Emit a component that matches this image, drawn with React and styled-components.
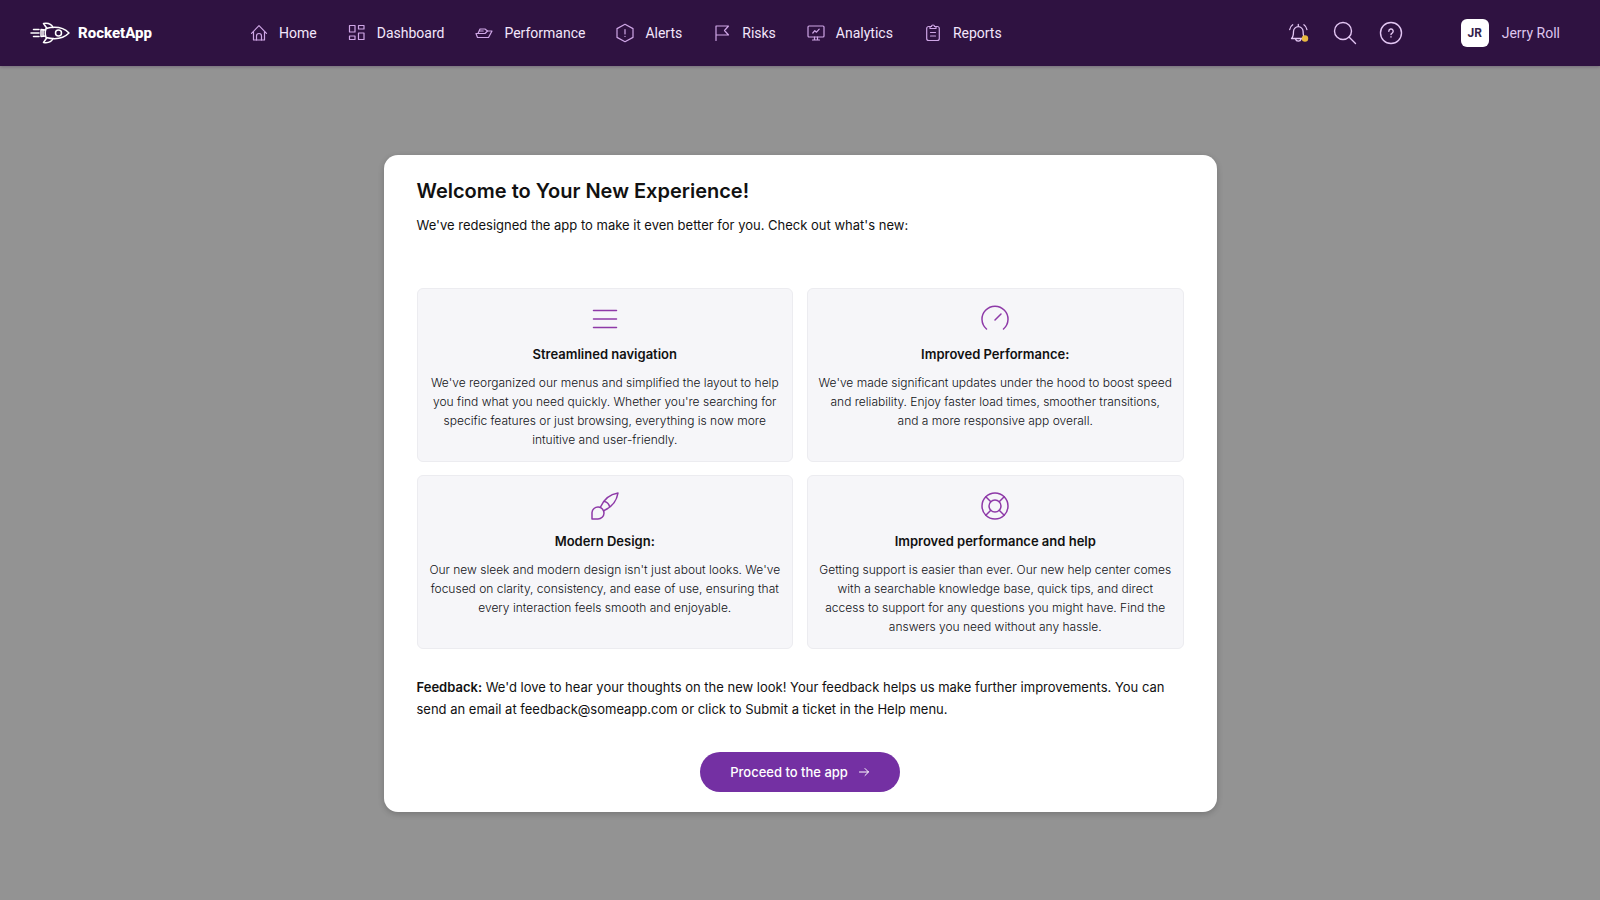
import React from "react";
import styled, { createGlobalStyle } from "styled-components";

const GlobalStyle = createGlobalStyle`
  * {
    box-sizing: border-box;
  }
  body {
    margin: 0;
    background: #939393;
    font-family: Inter, "Liberation Sans", sans-serif;
    color: #111;
  }
`;

const Page = styled.div`
  min-height: 100vh;
  display: flex;
  flex-direction: column;
`;

const Header = styled.header`
  display: flex;
  align-items: center;
  flex-wrap: wrap;
  min-height: 66px;
  padding: 0 40px 0 30px;
  background: #2f1241;
  color: #f3e6fb;
  font-family: Roboto, "Liberation Sans", sans-serif;
  font-size: 14px;
  box-shadow: 0 1px 3px rgba(47, 18, 65, 0.3);
`;

const Brand = styled.a`
  display: flex;
  align-items: center;
  gap: 8px;
  width: 219px;
  color: #fff;
  font-size: 15px;
  font-weight: 800;
  text-decoration: none;
`;

const Nav = styled.nav`
  display: flex;
  flex: 1;
  gap: 30px;
`;

const NavLink = styled.a`
  display: flex;
  align-items: center;
  gap: 10px;
  color: inherit;
  text-decoration: none;
`;

const Icon = styled.svg`
  display: block;
  flex: none;
  width: ${props => props.$size}px;
  height: ${props => props.$size}px;
  fill: none;
  stroke: ${props => props.$color || "#cfa6e6"};
  stroke-linecap: round;
  stroke-linejoin: round;
`;

const LogoSvg = styled.svg`
  display: block;
  width: 40px;
  height: 22px;
  fill: none;
  stroke: #fff;
  stroke-linecap: round;
  stroke-linejoin: round;
`;

const Tools = styled.div`
  display: flex;
  align-items: center;
  gap: 22px;
`;

const IconButton = styled.button`
  display: flex;
  padding: 0;
  border: 0;
  background: none;
  cursor: pointer;
`;

const User = styled.button`
  display: flex;
  align-items: center;
  gap: 13px;
  margin-left: 36px;
  padding: 0;
  border: 0;
  background: none;
  color: #dfc6ee;
  font: inherit;
  cursor: pointer;
`;

const Avatar = styled.span`
  display: flex;
  align-items: center;
  justify-content: center;
  width: 28px;
  height: 28px;
  border-radius: 6px;
  background: #fff;
  color: #33224a;
  font-size: 12px;
  font-weight: 700;
`;

const Main = styled.main`
  flex: 1;
  display: flex;
  align-items: center;
  justify-content: center;
  padding: 16px;
`;

const Dialog = styled.section`
  width: 100%;
  max-width: 833px;
  padding: 23px 33px 20px;
  border-radius: 14px;
  background: #fff;
  box-shadow: 0 2px 6px rgba(0, 0, 0, 0.2);
`;

const Title = styled.h1`
  margin: 0;
  font-size: 20px;
  font-weight: 600;
  line-height: 26px;
`;

const Text = styled.p`
  margin: ${props => props.$margin};
  font-size: 13px;
  line-height: 22px;
`;

const Strong = styled.strong`
  font-weight: 600;
`;

const Cards = styled.div`
  display: grid;
  grid-template-columns: repeat(auto-fit, minmax(320px, 1fr));
  gap: 13px 14px;
`;

const Card = styled.article`
  display: flex;
  flex-direction: column;
  align-items: center;
  padding: 16px 9px 12px;
  border: 1px solid #ececf0;
  border-radius: 6px;
  background: #f6f6f9;
  text-align: center;
`;

const CardTitle = styled.h2`
  margin: 11px 0 9px;
  font-size: 13px;
  font-weight: 600;
  line-height: 20px;
`;

const CardText = styled.p`
  margin: 0;
  color: #101116;
  font-size: 12px;
  font-weight: 300;
  line-height: 19px;
`;

const Proceed = styled.button`
  display: flex;
  align-items: center;
  gap: 10px;
  height: 40px;
  margin: 0 auto;
  padding: 0 30px;
  border: 0;
  border-radius: 20px;
  background: #7430a3;
  color: #fff;
  font: inherit;
  font-size: 13px;
  font-weight: 500;
  cursor: pointer;
`;

const navItems = [
  {
    label: "Home",
    icon: (
      <>
        <path d="M2.500 10.300 10 2.700l7.500 7.600M4.500 8.500v8.500h11V8.500" />
        <path d="M7.500 17v-4a2.500 2.500 0 0 1 5 0v4" />
      </>
    )
  },
  {
    label: "Dashboard",
    icon: (
      <>
        <rect x="2.500" y="2.500" width="5.500" height="6.500" />
        <rect x="11.500" y="2.500" width="5.500" height="3.500" />
        <rect x="2.500" y="13" width="5.500" height="3.500" />
        <rect x="11.500" y="10" width="5.500" height="6.500" />
      </>
    )
  },
  {
    label: "Performance",
    icon: (
      <>
        <path d="M2 10.500h9l2.500-2.500H18l-3.500 6.500h-11z" />
        <path d="M4 10.500 6 6h5l2.500 2M5.200 8h4" />
      </>
    )
  },
  {
    label: "Alerts",
    icon: (
      <>
        <path d="M10 1.300 18 5.600v8.800l-8 4.300-8-4.300V5.600z" />
        <path d="M10 6.500v4.500M10 13.300v.2" />
      </>
    )
  },
  {
    label: "Risks",
    icon: <path d="M4 17.500V3h12.500l-4 4.500 4 4.500H4" />
  },
  {
    label: "Analytics",
    icon: (
      <>
        <rect x="2" y="3" width="16" height="11" rx="1" />
        <path d="M8.500 14v3M11.500 14v3M6.500 17h7M6.800 10l2-2.300 1.700 1.500 2.700-3" />
      </>
    )
  },
  {
    label: "Reports",
    icon: (
      <>
        <path d="M7 3.500H5.700a2 2 0 0 0-2 2v10a2 2 0 0 0 2 2h8.600a2 2 0 0 0 2-2v-10a2 2 0 0 0-2-2H13" />
        <path d="M7 5.500v-2h1.500a1.500 1.500 0 0 1 3 0H13v2zM7.500 9.500h5M7.500 13h5" />
      </>
    )
  }
];

const features = [
  {
    title: "Streamlined navigation",
    text:
      "We've reorganized our menus and simplified the layout to help you find what you need quickly. Whether you're searching for specific features or just browsing, everything is now more intuitive and user-friendly.",
    icon: <path d="M2.500 5.500h23M2.500 14h23M2.500 22.500h23" />
  },
  {
    title: "Improved Performance:",
    text:
      "We've made significant updates under the hood to boost speed and reliability. Enjoy faster load times, smoother transitions, and\u00a0a more responsive app overall.",
    icon: <path d="M5.500 24a13 13 0 1 1 17 0M14 15l6-6" />
  },
  {
    title: "Modern Design:",
    text:
      "Our new sleek and modern design isn't just about looks. We've focused on clarity, consistency, and ease of use, ensuring that every interaction feels smooth and enjoyable.",
    icon: (
      <>
        <path d="M1 27v-6.500a6 6 0 1 1 6 6.500z" />
        <path d="M9.500 15C13 7 18 2.500 27 1c-1.500 9-6 14-14 17.500M13.500 9.500q4 1 5 5" />
      </>
    )
  },
  {
    title: "Improved performance and help",
    text:
      "Getting support is easier than ever. Our new help center comes with a searchable knowledge base, quick tips, and direct access to support for any questions you might have. Find the answers you need without any hassle.",
    icon: (
      <>
        <circle cx="14" cy="14" r="13" />
        <circle cx="14" cy="14" r="6" />
        <path d="m4.800 4.800 5 5M23.200 4.800l-5 5M4.800 23.200l5-5M23.200 23.200l-5-5" />
      </>
    )
  }
];

const Logo = () => (
  <LogoSvg viewBox="0 0 40 22" strokeWidth="1.500" aria-hidden="true">
    <path d="M16 6.500C26 4 34 6 39 11c-5 5-13 7-23 4.500q-1.500-4.500 0-9z" />
    <circle cx="28.500" cy="11" r="3" />
    <path d="M15.500 8 11 7.500v7l4.500-.5M13 8v6M17 6.500 13.500 1.500c5-.8 8 .8 9.500 4M17 15.500l-3.500 5c5 .8 8-.8 9.500-4" />
    <path d="M3.500 7.500H9M1 11h8M3.500 14.500H9" />
  </LogoSvg>
);

export default function App() {
  return (
    <Page>
      <GlobalStyle />
      <Header>
        <Brand href="#">
          <Logo />
          RocketApp
        </Brand>
        <Nav>
          {navItems.map(item => (
            <NavLink key={item.label} href="#">
              <Icon
                $size={20}
                viewBox="0 0 20 20"
                strokeWidth="1.200"
                aria-hidden="true"
              >
                {item.icon}
              </Icon>
              {item.label}
            </NavLink>
          ))}
        </Nav>
        <Tools>
          <IconButton aria-label="Notifications">
            <Icon
              $size={24}
              viewBox="0 0 24 24"
              $color="#e3c6f3"
              strokeWidth="1.300"
            >
              <path d="M4.500 17.500c1.500-1.500 2-3 2-7a4.800 4.800 0 0 1 9.600 0c0 4 .5 5.500 2 7zM11.300 5V3.500M8.500 18a2.900 2.900 0 0 0 5.600 0M2.700 8.500q.5-3 3-4.700M19.900 8.500q-.5-3-3-4.700" />
              <circle cx="18" cy="17.500" r="3.200" fill="#e9b93f" stroke="none" />
            </Icon>
          </IconButton>
          <IconButton aria-label="Search">
            <Icon
              $size={24}
              viewBox="0 0 24 24"
              $color="#e3c6f3"
              strokeWidth="1.400"
            >
              <circle cx="10" cy="10" r="8.500" />
              <path d="m16 16 6.500 6.500" />
            </Icon>
          </IconButton>
          <IconButton aria-label="Help">
            <Icon
              $size={24}
              viewBox="0 0 24 24"
              $color="#e3c6f3"
              strokeWidth="1.400"
            >
              <circle cx="12" cy="12" r="10.500" />
              <path d="M9.800 10.200a2.200 2.200 0 1 1 3.300 1.900q-1.100.6-1.100 1.400M12 15.800v.2" />
            </Icon>
          </IconButton>
          <User>
            <Avatar>JR</Avatar>
            Jerry Roll
          </User>
        </Tools>
      </Header>
      <Main>
        <Dialog role="dialog" aria-labelledby="welcome-title">
          <Title id="welcome-title">Welcome to Your New Experience!</Title>
          <Text $margin="10px 0 52px">
            We've redesigned the app to make it even better for you. Check out
            what's new:
          </Text>
          <Cards>
            {features.map(feature => (
              <Card key={feature.title}>
                <Icon
                  $size={28}
                  $color="#8e3aa8"
                  viewBox="0 0 28 28"
                  strokeWidth="1.500"
                  aria-hidden="true"
                >
                  {feature.icon}
                </Icon>
                <CardTitle>{feature.title}</CardTitle>
                <CardText>{feature.text}</CardText>
              </Card>
            ))}
          </Cards>
          <Text $margin="27px 0 32px">
            <Strong>Feedback:</Strong> We'd love to hear your thoughts on the
            new look! Your feedback helps us make further improvements. You can
            send an email at feedback@someapp.com or click to Submit a ticket in
            the Help menu.
          </Text>
          <Proceed>
            Proceed to the app
            <Icon $size={12} $color="#fff" viewBox="0 0 12 12">
              <path d="M1.500 6h9M7 2.500 10.500 6 7 9.500" />
            </Icon>
          </Proceed>
        </Dialog>
      </Main>
    </Page>
  );
}
